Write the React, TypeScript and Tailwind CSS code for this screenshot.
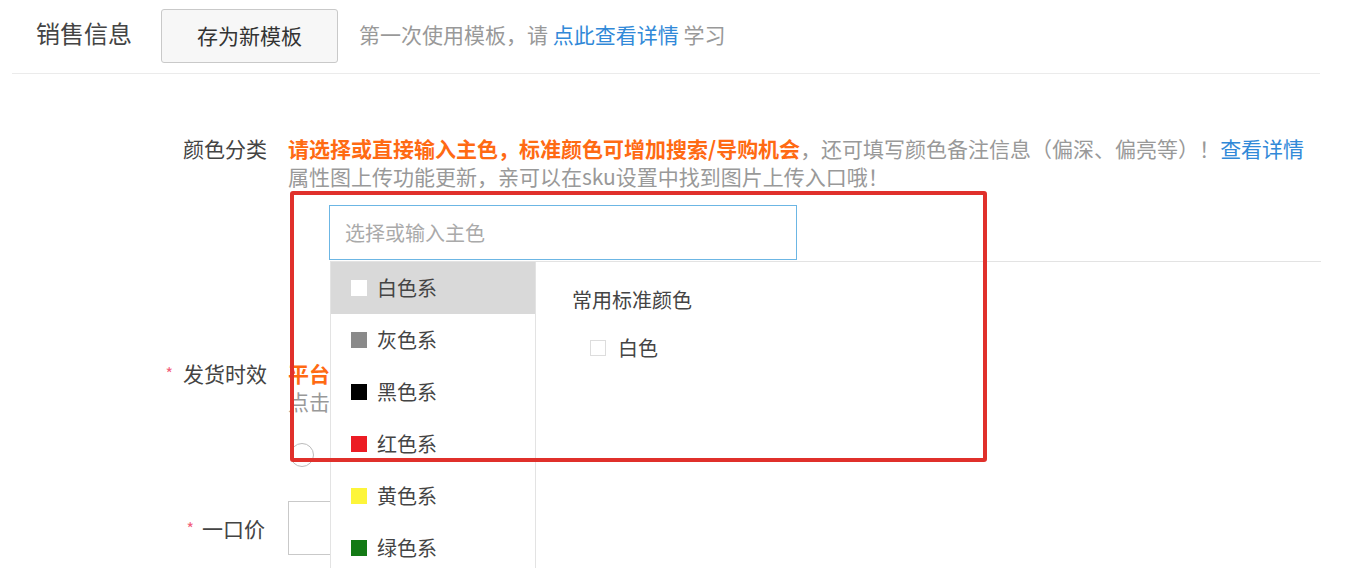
import React from "react";

const font = { fontFamily: '"Noto Sans CJK SC", "Noto Sans", sans-serif' };

const families = [
  { name: "白色系", color: "bg-white", active: true },
  { name: "灰色系", color: "bg-[#8a8a8a]" },
  { name: "黑色系", color: "bg-black" },
  { name: "红色系", color: "bg-[#ec1c24]" },
  { name: "黄色系", color: "bg-[#fdf53a]" },
  { name: "绿色系", color: "bg-[#137a15]" },
];

export default function App() {
  return (
    <div
      className="relative w-[1350px] h-[586px] overflow-hidden bg-white text-[#444]"
      style={font}
    >
      {/* header */}
      <div className="pt-[9px] pl-[36px] flex items-center h-[63px]">
        <span className="text-[24px] leading-[28px] text-[#444] -mt-[6px]">销售信息</span>
        <button className="ml-[29px] w-[177px] h-[54px] border border-[#c9c9c9] bg-[#f7f7f7] rounded-[3px] text-[21px] text-[#333]">
          存为新模板
        </button>
        <span className="ml-[21px] text-[21px] leading-[28px] text-[#999] -mt-[4px]">
          第一次使用模板，请 <span className="text-[#3189d8]">点此查看详情</span> 学习
        </span>
      </div>
      <div className="mt-[10px] ml-[12px] w-[1308px] h-px bg-[#ebebeb]" />

      {/* color row */}
      <div className="mt-[60px] flex">
        <div className="w-[267px] text-right text-[21px] leading-[28px] text-[#444]">颜色分类</div>
        <div className="ml-[21px]">
          <div className="text-[21px] leading-[28px] whitespace-nowrap">
            <span className="font-bold text-[#ff6a13]">请选择或直接输入主色，标准颜色可增加搜索/导购机会</span>
            <span className="text-[#999]">，还可填写颜色备注信息（偏深、偏亮等）！</span>
            <span className="text-[#3189d8]">查看详情</span>
          </div>
          <div className="text-[21px] leading-[28px] text-[#999] whitespace-nowrap">
            属性图上传功能更新，亲可以在sku设置中找到图片上传入口哦！
          </div>
          <div className="mt-[15px] ml-[41px] w-[468px] h-[55px] border border-[#6cb6e4] flex items-center pl-[15px] text-[20px] text-[#aaa]">
            选择或输入主色
          </div>
        </div>
      </div>

      {/* delivery row */}
      <div className="mt-[99px] flex">
        <div className="w-[267px] flex justify-end items-start text-[21px] leading-[28px] text-[#444]">
          <span className="text-[#f2607a] text-[16px] mr-[10px] leading-[28px]">*</span>
          发货时效
        </div>
        <div className="ml-[21px]">
          <div className="w-[42px] overflow-hidden whitespace-nowrap">
            <div className="text-[21px] leading-[28px] font-bold text-[#ff6a13]">平台</div>
            <div className="text-[21px] leading-[28px] text-[#999]">点击</div>
          </div>
          <div className="mt-[28px] ml-[2px] w-[24px] h-[24px] rounded-full border border-[#bbb]" />
        </div>
      </div>

      {/* price row */}
      <div className="mt-[34px] flex items-center">
        <div className="w-[265px] flex justify-end items-center text-[21px] leading-[28px] text-[#444]">
          <span className="text-[#f2607a] text-[16px] mr-[8px]">*</span>
          一口价
        </div>
        <div className="ml-[23px] w-[200px] h-[54px] border border-[#c9c9c9]" />
      </div>

      {/* dropdown overlay */}
      <div className="absolute left-[330px] top-[261px] w-[991px] h-[307px] bg-white border-l border-t border-[#e3e3e3] flex">
        <div className="w-[205px] h-full border-r border-[#e3e3e3]">
          {families.map((f) => (
            <div
              key={f.name}
              className={`h-[52px] flex items-center pl-[20px] ${f.active ? "bg-[#d9d9d9]" : ""}`}
            >
              <span className={`w-[16px] h-[16px] ${f.color}`} />
              <span className="ml-[10px] text-[20px] text-[#444]">{f.name}</span>
            </div>
          ))}
        </div>
        <div className="pl-[36px] pt-[24px]">
          <div className="text-[20px] leading-[28px] text-[#444]">常用标准颜色</div>
          <div className="mt-[20px] ml-[18px] flex items-center">
            <span className="w-[16px] h-[16px] border border-[#ddd] bg-white" />
            <span className="ml-[12px] text-[20px] leading-[28px] text-[#444]">白色</span>
          </div>
        </div>
      </div>

      {/* red annotation box */}
      <div className="absolute left-[290px] top-[191px] w-[697px] h-[271px] border-[4px] border-[#e0302b] rounded-[3px] pointer-events-none" />
    </div>
  );
}
